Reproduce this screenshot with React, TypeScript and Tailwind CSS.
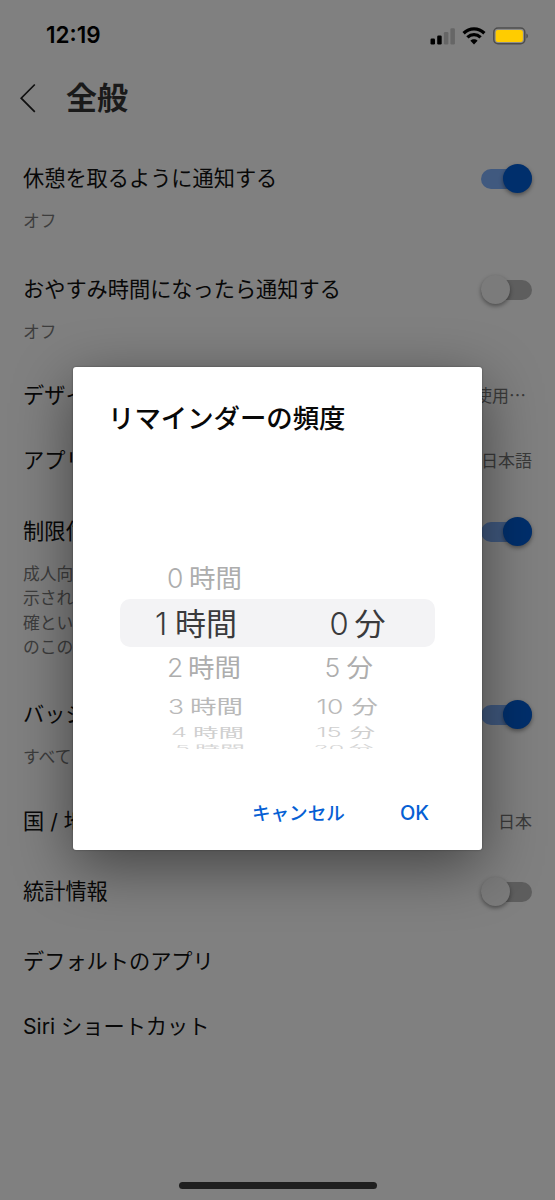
import React, { useState } from "react";
import clsx from "clsx";

type SettingRow = {
  title: string;
  height: string;
  lines?: string[];
  value?: string;
  toggle?: boolean;
};

type WheelItem = {
  num: string;
  unit: string;
  row: string;
  indent: string;
  numWidth: string;
  text: string;
};

const rows: SettingRow[] = [
  { title: "休憩を取るように通知する", height: "h-[111px]", lines: ["オフ"], toggle: true },
  { title: "おやすみ時間になったら通知する", height: "h-[106px]", lines: ["オフ"], toggle: false },
  { title: "デザイン", height: "h-[65px]", value: "使用…" },
  { title: "アプリ", height: "h-[71px]", value: "日本語" },
  {
    title: "制限付き",
    height: "h-[183px]",
    lines: ["成人向け", "示されな", "確という", "のこの"],
    toggle: true,
  },
  { title: "バッジ", height: "h-[107px]", lines: ["すべて"], toggle: true },
  { title: "国 / 地域", height: "h-[70px]", value: "日本" },
  { title: "統計情報", height: "h-[70px]", toggle: false },
  { title: "デフォルトのアプリ", height: "h-[65px]" },
  { title: "Siri ショートカット", height: "h-[65px]" },
];

// Rows get flatter towards the bottom, like the curve of the wheel
const hours: WheelItem[] = [
  { num: "0", unit: "時間", row: "h-[43px] pt-0.5", indent: "pl-[47px]", numWidth: "w-[22px]", text: "text-[26.5px] text-[#adadad]" },
  { num: "1", unit: "時間", row: "h-12", indent: "pl-[35px]", numWidth: "w-[20px]", text: "text-[31px] text-[#3a3a3c]" },
  { num: "2", unit: "時間", row: "h-10", indent: "pl-[47px]", numWidth: "w-[21px]", text: "text-[26.5px] text-[#adadad] scale-y-[0.95]" },
  { num: "3", unit: "時間", row: "h-[38px]", indent: "pl-[48px]", numWidth: "w-[22px]", text: "text-[26.5px] text-[#b9b9b9] scale-y-[0.75]" },
  { num: "4", unit: "時間", row: "h-[15px]", indent: "pl-[51px]", numWidth: "w-[22px]", text: "text-[25.5px] text-[#cfcfcf] scale-y-[0.5]" },
  { num: "5", unit: "時間", row: "h-[9px]", indent: "pl-[55px]", numWidth: "w-[20px]", text: "text-[25px] text-[#d6d6d6] scale-y-[0.3]" },
];

const minutes: WheelItem[] = [
  { num: "", unit: "", row: "h-[43px]", indent: "pl-0", numWidth: "w-0", text: "text-[26.5px]" },
  { num: "0", unit: "分", row: "h-12", indent: "pl-[52px]", numWidth: "w-[25px]", text: "text-[31px] text-[#3a3a3c]" },
  { num: "5", unit: "分", row: "h-10", indent: "pl-[47px]", numWidth: "w-[22px]", text: "text-[26.5px] text-[#adadad] scale-y-[0.95]" },
  { num: "10", unit: "分", row: "h-[38px]", indent: "pl-[39px]", numWidth: "w-[35px]", text: "text-[26.5px] text-[#b9b9b9] scale-y-[0.75]" },
  { num: "15", unit: "分", row: "h-[15px]", indent: "pl-[39px]", numWidth: "w-[33px]", text: "text-[25.5px] text-[#cfcfcf] scale-y-[0.5]" },
  { num: "20", unit: "分", row: "h-[9px]", indent: "pl-[36px]", numWidth: "w-[35px]", text: "text-[25px] text-[#d6d6d6] scale-y-[0.3]" },
];

function StatusBar() {
  return (
    <div className="flex h-[71px] items-center justify-between pl-[46px] pr-[26px]">
      <div className="text-[22.5px] font-semibold leading-none text-black">12:19</div>
      <div className="flex items-center">
        <svg width="26" height="18" viewBox="0 0 26 18">
          <rect x="0.5" y="11.5" width="4.5" height="6" rx="1.2" fill="#000" />
          <rect x="7.2" y="8.5" width="4.5" height="9" rx="1.2" fill="#000" />
          <rect x="13.9" y="5" width="4.5" height="12.5" rx="1.2" fill="#666" />
          <rect x="20.4" y="1.2" width="4.5" height="16.3" rx="1.2" fill="#666" />
        </svg>
        <svg className="ml-[6px]" width="24" height="18" viewBox="0 0 24 18" fill="none" stroke="#000">
          <path d="M1.6 6.2C7.5 .5 16.5 .5 22.4 6.2" strokeWidth="3.3" />
          <path d="M5.4 10.4C9.2 6.8 14.8 6.8 18.6 10.4" strokeWidth="3.3" />
          <path d="M8.4 13.7C10.4 11.8 13.6 11.8 15.6 13.7L12 17.4Z" fill="#000" stroke="none" />
        </svg>
        <svg className="ml-[7px]" width="36" height="18" viewBox="0 0 36 18">
          <rect x="0.8" y="1" width="31" height="15.8" rx="4.2" fill="#8c8c8c" stroke="#4d4d4d" strokeWidth="1.5" />
          <rect x="2.7" y="2.9" width="27.2" height="12" rx="2.2" fill="#ffcc00" />
          <path d="M33.4 6.5C35.4 7.2 35.4 10.7 33.4 11.4Z" fill="#4d4d4d" />
        </svg>
      </div>
    </div>
  );
}

function Toggle({ on, onClick }: { on: boolean; onClick: () => void }) {
  return (
    <button
      type="button"
      role="switch"
      aria-checked={on}
      onClick={onClick}
      className={clsx(
        "mt-px flex h-5 w-[51px] shrink-0 items-center rounded-full",
        on ? "justify-end bg-[#40597f]" : "justify-start bg-[#5e5e5e]"
      )}
    >
      <span
        className={clsx(
          "h-[29px] w-[29px] shrink-0 rounded-full shadow-[0_2px_4px_rgba(0,0,0,0.4)]",
          on ? "bg-[#002f6c]" : "bg-[#7b7b7b]"
        )}
      />
    </button>
  );
}

function Row({ row }: { row: SettingRow }) {
  const [on, setOn] = useState(!!row.toggle);

  return (
    <div className={clsx("shrink-0 pl-[23px] pr-[23px] pt-[17px]", row.height)}>
      <div className="flex h-8 items-center justify-between whitespace-nowrap">
        <div className="text-[21.2px] leading-8 text-[#080808]">{row.title}</div>
        {row.value && (
          <div
            className={clsx(
              "font-['Noto_Sans_CJK_JP',sans-serif] text-[17px] leading-8 text-[#3a3a3a]",
              row.value.endsWith("…") && "pr-1.5"
            )}
          >
            {row.value}
          </div>
        )}
        {row.toggle !== undefined && <Toggle on={on} onClick={() => setOn((v) => !v)} />}
      </div>
      {row.lines && (
        <div className="mt-[15px] w-20 overflow-hidden whitespace-nowrap text-[16.8px] leading-[24.3px] text-[#3d3d3d]">
          {row.lines.map((line) => (
            <div key={line}>{line}</div>
          ))}
        </div>
      )}
    </div>
  );
}

function Wheel({ items }: { items: WheelItem[] }) {
  return (
    <div className="flex-1">
      {items.map((item, i) => (
        <div
          key={i}
          className={clsx(
            "flex items-center",
            item.row,
            item.indent,
            i === items.length - 1 && "overflow-hidden pt-[7px]"
          )}
        >
          <div className={clsx("flex items-center whitespace-nowrap leading-none", item.text)}>
            <span className={clsx("font-light", item.numWidth)}>{item.num}</span>
            <span>{item.unit}</span>
          </div>
        </div>
      ))}
    </div>
  );
}

function ReminderDialog() {
  return (
    <div className="flex h-[483px] w-[409px] flex-col rounded-[3px] bg-white shadow-[0_0_2px_rgba(0,0,0,0.4),0_16px_60px_rgba(0,0,0,0.48)]">
      <h2 className="pl-[35px] pt-[31px] text-[26.4px] font-medium leading-10 text-[#080808]">
        リマインダーの頻度
      </h2>
      <div className="relative mx-[47px] mt-[118px] flex">
        <div className="absolute inset-x-0 top-[43px] h-12 rounded-[10px] bg-[#f3f3f5]" />
        <div className="relative flex w-full">
          <Wheel items={hours} />
          <Wheel items={minutes} />
        </div>
      </div>
      <div className="mt-auto flex h-[76px] items-center justify-end gap-[55px] pr-[53px] text-[20px] font-medium text-[#065fd4]">
        <button type="button" className="pt-[3px] text-[18.6px]">キャンセル</button>
        <button type="button" className="pt-0.5">OK</button>
      </div>
    </div>
  );
}

export default function App() {
  return (
    <div className="relative h-[1200px] w-[555px] overflow-hidden bg-[#808080] font-['Inter','Noto_Sans_CJK_JP',sans-serif]">
      <StatusBar />
      <header className="flex h-[74px] items-start pl-5 pt-[7px]">
        <svg className="mt-[5px]" width="16" height="30" viewBox="0 0 16 30" fill="none" stroke="#0f0f0f" strokeWidth="1.7">
          <path d="M14.8 1.5 1.2 15.2 14.8 28.8" />
        </svg>
        <h1 className="ml-[30px] text-[31px] font-bold leading-10 text-[#1a1a1a]">全般</h1>
      </header>
      <main className="flex flex-col">
        {rows.map((row) => (
          <Row key={row.title} row={row} />
        ))}
      </main>

      <div className="absolute inset-0 flex items-start justify-center pt-[367px]">
        <ReminderDialog />
      </div>

      {/* Home indicator */}
      <div className="absolute bottom-[11px] left-[179px] h-[7px] w-[198px] rounded-full bg-[#1f1f1f]" />
    </div>
  );
}
